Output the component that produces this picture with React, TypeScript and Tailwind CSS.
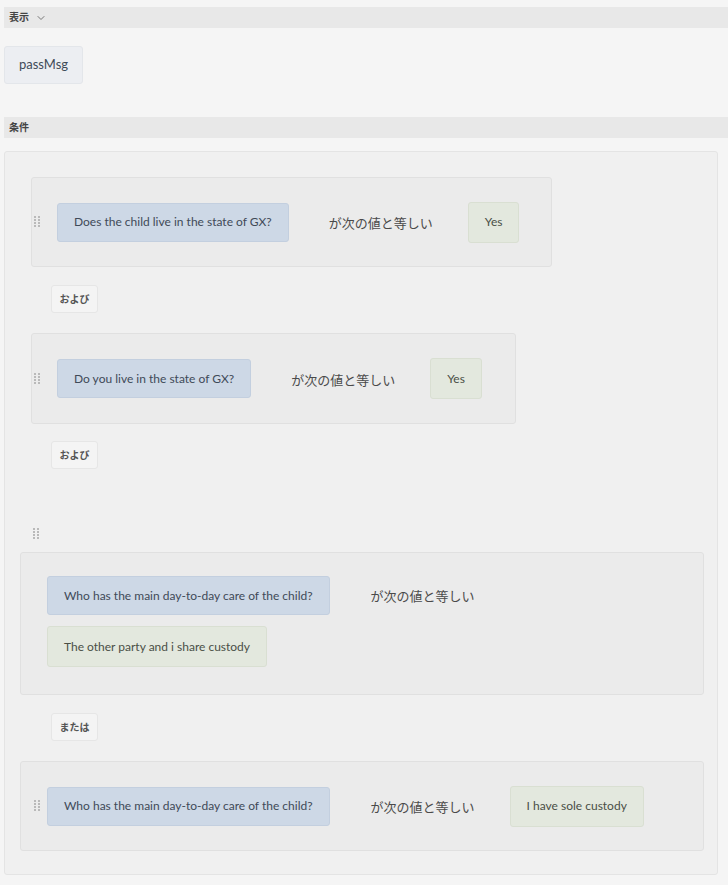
import { ChevronDown } from "lucide-react";

const font = { fontFamily: "Lato, 'Noto Sans CJK JP', sans-serif" };

function Grip() {
  return (
    <svg width="6" height="12" viewBox="0 0 6 12" className="shrink-0">
      {[0, 3, 6, 9].map((y) => (
        <g key={y} fill="#b9b9b9">
          <rect x="0" y={y} width="2" height="2" />
          <rect x="4" y={y} width="2" height="2" />
        </g>
      ))}
    </svg>
  );
}

function Question({ text }: { text: string }) {
  return (
    <div className="flex h-[39px] items-center rounded-[3px] border border-[#c3cfdf] bg-[#cdd8e6] px-4 text-[12px] text-[#3f4a58]">
      {text}
    </div>
  );
}

function Answer({ text }: { text: string }) {
  return (
    <div className="flex h-[41px] items-center rounded-[3px] border border-[#d9dfd2] bg-[#e3e8de] px-4 text-[12px] text-[#4a4f46]">
      {text}
    </div>
  );
}

function Equals() {
  return <span className="text-[13px] text-[#4a4a4a]">が次の値と等しい</span>;
}

function Joiner({ label }: { label: string }) {
  return (
    <div className="flex h-[28px] w-[47px] items-center justify-center rounded-[3px] border border-[#e6e6e6] bg-[#f4f4f4] text-[10px] font-bold text-[#555]">
      {label}
    </div>
  );
}

export default function App() {
  return (
    <div className="min-h-[885px] bg-[#f5f5f5] pt-[7px]" style={font}>
      <div className="ml-1 flex h-[21px] items-center gap-1.5 bg-[#e8e8e8] pl-[5px] text-[10px] font-bold text-[#444]">
        表示
        <ChevronDown className="size-3 text-[#777]" strokeWidth={2} />
      </div>

      <div className="ml-1 mt-[18px] flex h-[38px] w-[79px] items-center justify-center rounded-[3px] border border-[#e3e6ea] bg-[#eceef2] text-[13px] text-[#3f4a58]">
        passMsg
      </div>

      <div className="ml-1 mt-[33px] flex h-[21px] items-center bg-[#e8e8e8] pl-[5px] text-[10px] font-bold text-[#444]">
        条件
      </div>

      <div className="ml-1 mt-[13px] h-[724px] w-[714px] rounded-[3px] border border-[#e4e4e4] bg-[#f0f0f0] pt-[25px]">
        <div className="ml-[26px] flex h-[90px] w-[521px] items-center rounded-[3px] border border-[#e0e0e0] bg-[#ebebeb]">
          <div className="ml-[2px] mr-[17px]"><Grip /></div>
          <Question text="Does the child live in the state of GX?" />
          <div className="ml-[40px] mr-[35px]"><Equals /></div>
          <Answer text="Yes" />
        </div>

        <div className="ml-[46px] mt-[18px]"><Joiner label="および" /></div>

        <div className="ml-[26px] mt-[20px] flex h-[91px] w-[485px] items-center rounded-[3px] border border-[#e0e0e0] bg-[#ebebeb]">
          <div className="ml-[2px] mr-[17px]"><Grip /></div>
          <Question text="Do you live in the state of GX?" />
          <div className="ml-[40px] mr-[35px]"><Equals /></div>
          <Answer text="Yes" />
        </div>

        <div className="ml-[46px] mt-[17px]"><Joiner label="および" /></div>

        <div className="ml-[28px] mt-[59px]"><Grip /></div>

        <div className="ml-[15px] mt-[12px] flex h-[143px] w-[684px] flex-col items-start gap-[11px] rounded-[3px] border border-[#e0e0e0] bg-[#ebebeb] pl-[26px] pt-[23px]">
          <div className="flex items-center">
            <Question text="Who has the main day-to-day care of the child?" />
            <div className="ml-[41px] -mt-[2px]"><Equals /></div>
          </div>
          <Answer text="The other party and i share custody" />
        </div>

        <div className="ml-[46px] mt-[18px]"><Joiner label="または" /></div>

        <div className="ml-[15px] mt-[20px] flex h-[90px] w-[684px] items-center rounded-[3px] border border-[#e0e0e0] bg-[#ebebeb]">
          <div className="ml-[13px] mr-[7px]"><Grip /></div>
          <Question text="Who has the main day-to-day care of the child?" />
          <div className="ml-[41px] mr-[35px]"><Equals /></div>
          <Answer text="I have sole custody" />
        </div>
      </div>
    </div>
  );
}
